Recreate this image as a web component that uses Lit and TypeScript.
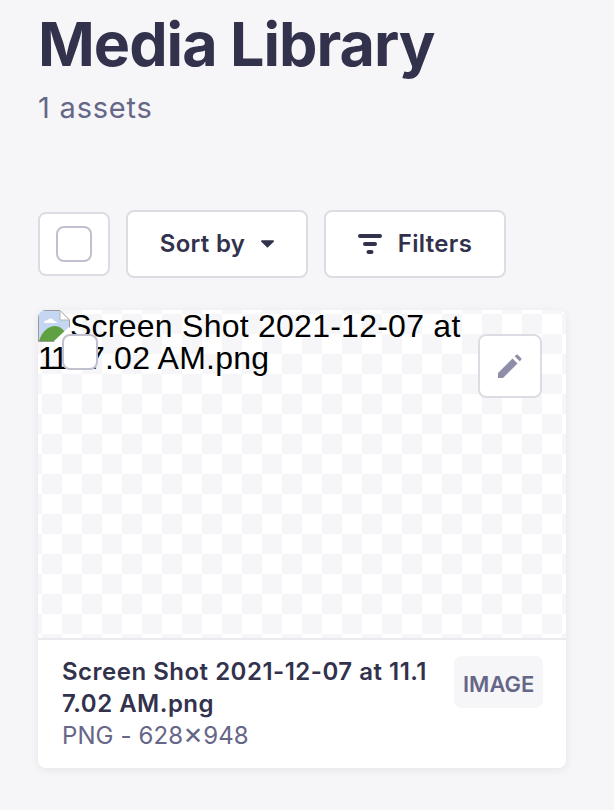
import { LitElement, css, html } from "lit";
import { customElement } from "lit/decorators.js";

@customElement("asset-card")
class AssetCard extends LitElement {
    static styles = css`
        :host {
            display: block;
        }

        .card {
            background: #fff;
            border-radius: 8px;
            overflow: hidden;
            box-shadow: 0 2px 8px rgba(33, 33, 52, 0.08);
        }

        .media {
            position: relative;
            height: 328px;
            border-bottom: 2px solid #eaeaef;
            background: repeating-conic-gradient(#f6f6f9 0 25%, #fff 0 50%) 4px -16px / 40px 40px;
        }

        .alt {
            font: 400 32px/32px "Liberation Sans", Arial, sans-serif;
            letter-spacing: 0.25px;
            color: #000;
        }

        .tight {
            letter-spacing: -2.75px;
        }

        .broken {
            display: inline-block;
            width: 32px;
            height: 32px;
            vertical-align: -5px;
        }

        .pick {
            position: absolute;
            left: 24px;
            top: 24px;
            box-sizing: border-box;
            width: 36px;
            height: 36px;
            background: #fff;
            border: 2px solid #c0c0cf;
            border-radius: 8px;
        }

        .edit {
            position: absolute;
            right: 24px;
            top: 24px;
            box-sizing: border-box;
            width: 64px;
            height: 64px;
            display: flex;
            align-items: center;
            justify-content: center;
            background: #fff;
            border: 2px solid #dcdce4;
            border-radius: 8px;
        }

        .info {
            display: flex;
            justify-content: space-between;
            align-items: flex-start;
            gap: 24px;
            padding: 16px 24px 16px;
        }

        .name {
            width: 368px;
            font: 600 24px/32px Inter, sans-serif;
            letter-spacing: 0.5px;
            color: #32324d;
            word-break: break-all;
        }

        .ext {
            font: 400 24px/32px Inter, sans-serif;
            letter-spacing: 0.1px;
            color: #666687;
        }

        .tag {
            box-sizing: border-box;
            padding: 4px 9px 0;
            height: 52px;
            display: flex;
            align-items: center;
            background: #f6f6f9;
            border-radius: 8px;
            font: 600 22px/1 Inter, sans-serif;
            color: #666687;
        }
    `;

    protected render() {
        return html`
            <div class="card">
                <div class="media">
                    <div class="alt">
                        <svg class="broken" viewBox="0 0 32 32">
                            <path d="M.5.5H22L31.5 10V31.5H.5Z" fill="#c5d6f2" stroke="#9a9aa0" />
                            <path d="M22 .5V10H31.5Z" fill="#fff" stroke="#b5b5ba" />
                            <path d="M1 31C4 21 11 16 17 16c4 0 7 2 10 6l-9 9Z" fill="#5fa043" />
                            <path d="M6 13c0-2 2-3 4-3 1-2 5-2 6 1 2 0 3 1 3 2Z" fill="#fff" />
                            <path d="M16 32L32 17V32Z" fill="#fff" />
                            <path d="M17 32L32 18" stroke="#fff" stroke-width="3" />
                        </svg>Screen Shot 2021-12-07 at <span class="tight">11.1</span>7.02 AM.png
                    </div>
                    <div class="pick"></div>
                    <div class="edit">
                        <svg width="24" height="24" viewBox="0 0 24 24">
                            <path d="M0 24V19L14.500 4.500L19.500 9.500L5 24Z" fill="#8e8ea9" />
                            <path d="M16.700 2.300L18 1a1.400 1.400 0 0 1 2 0l3 3a1.400 1.400 0 0 1 0 2L21.700 7.300Z" fill="#8e8ea9" />
                        </svg>
                    </div>
                </div>
                <div class="info">
                    <div>
                        <div class="name">Screen Shot 2021-12-07 at 11.17.02 AM.png</div>
                        <div class="ext">PNG - 628✕948</div>
                    </div>
                    <div class="tag">IMAGE</div>
                </div>
            </div>
        `;
    }
}

@customElement("app-root")
class AppRoot extends LitElement {
    static styles = css`
        :host {
            display: block;
            min-height: 810px;
            background: #f6f6f9;
            font-family: Inter, sans-serif;
        }

        .page {
            box-sizing: border-box;
            width: 614px;
            padding: 0 48px 0 38px;
        }

        h1 {
            margin: 0;
            padding-top: 10px;
            font: 700 61px/68px Inter, sans-serif;
            letter-spacing: -1px;
            color: #32324d;
        }

        .count {
            margin-top: 12px;
            font: 400 29px/36px Inter, sans-serif;
            letter-spacing: 0.8px;
            color: #666687;
        }

        .toolbar {
            display: flex;
            gap: 16px;
            margin-top: 84px;
        }

        .tool {
            box-sizing: border-box;
            height: 68px;
            display: flex;
            align-items: center;
            justify-content: center;
            gap: 16px;
            background: #fff;
            border: 2px solid #dcdce4;
            border-radius: 8px;
            font: 600 24px/1 Inter, sans-serif;
            letter-spacing: 0.3px;
            color: #32324d;
        }

        .select {
            width: 72px;
            height: 64px;
            margin-top: 2px;
        }

        .box {
            box-sizing: border-box;
            width: 36px;
            height: 36px;
            border: 2px solid #c0c0cf;
            border-radius: 8px;
        }

        .sort {
            width: 182px;
        }

        .filters {
            width: 182px;
        }

        asset-card {
            margin-top: 32px;
        }
    `;

    protected render() {
        return html`
            <div class="page">
                <h1>Media Library</h1>
                <div class="count">1 assets</div>
                <div class="toolbar">
                    <div class="tool select"><div class="box"></div></div>
                    <div class="tool sort">
                        Sort by
                        <svg width="13" height="8" viewBox="0 0 14 8"><path d="M1 0h12a1 1 0 0 1 .7 1.7L7 8 .3 1.7A1 1 0 0 1 1 0Z" fill="#32324d" /></svg>
                    </div>
                    <div class="tool filters">
                        <svg width="24" height="20" viewBox="0 0 24 20">
                            <rect x="0" y="0" width="24" height="4" rx="2" fill="#32324d" />
                            <rect x="5" y="8" width="14" height="4" rx="2" fill="#32324d" />
                            <rect x="8.500" y="16" width="7" height="4" rx="2" fill="#32324d" />
                        </svg>
                        Filters
                    </div>
                </div>
                <asset-card></asset-card>
            </div>
        `;
    }
}

export { AppRoot, AssetCard };
